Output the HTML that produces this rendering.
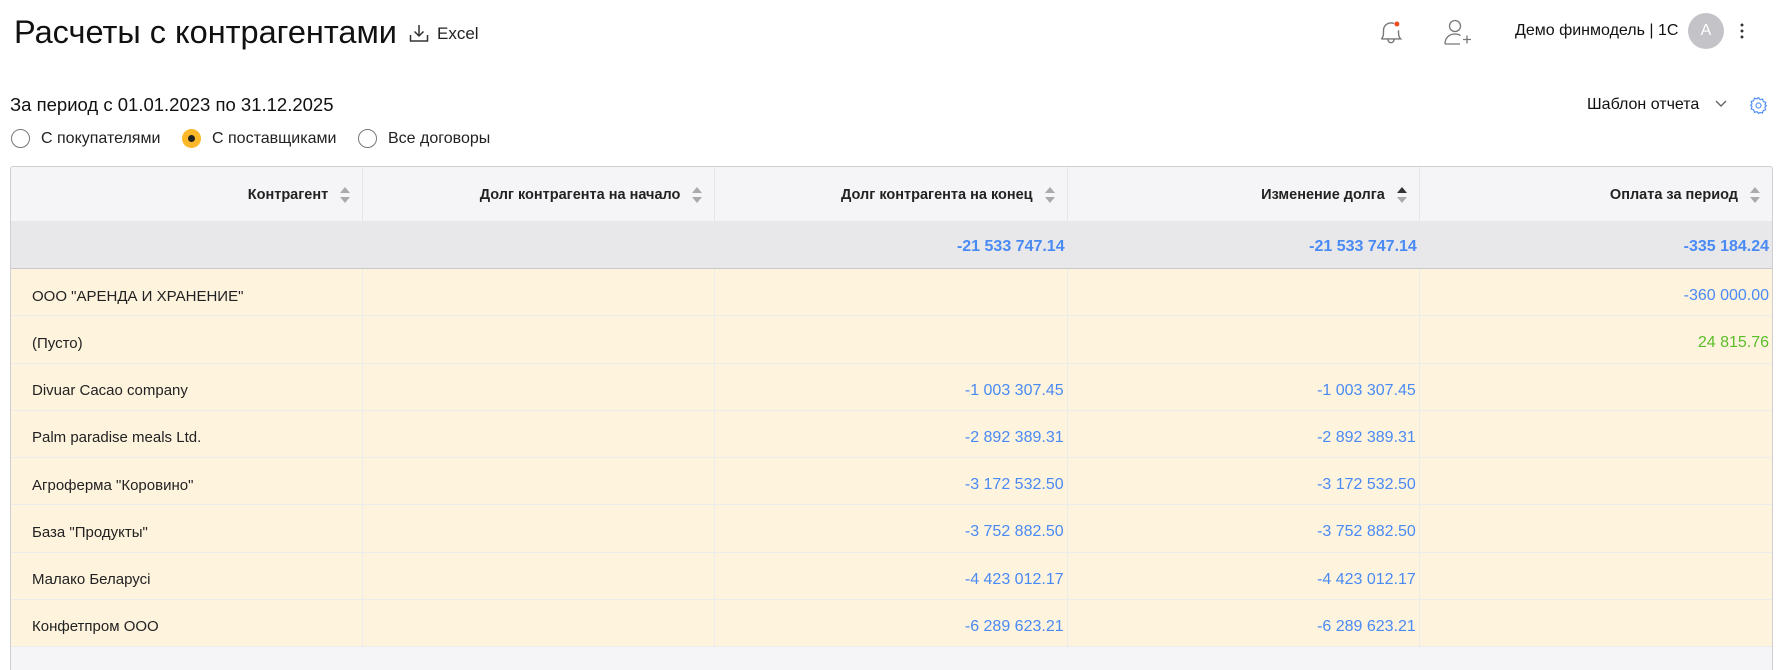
<!DOCTYPE html>
<html><head><meta charset="utf-8"><style>
*{box-sizing:border-box;margin:0;padding:0}
html,body{width:1781px;height:670px;overflow:hidden}
body{background:#fff;font-family:"Liberation Sans",sans-serif;color:#1a1a1a;position:relative}
.a{position:absolute;white-space:nowrap}
.tbl{position:absolute;left:10px;top:166px;width:1763px;height:504px;border:1px solid #cfcfd3;border-bottom:none;border-radius:3px 3px 0 0;background:#f5f5f7;overflow:hidden}
.row{position:absolute;left:0;width:1761px;display:flex}
.row div{width:352.4px;border-right:1px solid #ececec;display:flex;align-items:center;justify-content:flex-end;padding-right:3px;padding-top:8px;font-size:16px;color:#4a8af4}
.row div:last-child{border-right:none}
.row div.n{justify-content:flex-start;padding-left:21px;color:#222;font-size:15px}
.hd div{font-weight:bold;font-size:14.5px;color:#222;padding-right:12px;padding-top:2px;border-right:1px solid #e6e6e8}
.s{display:inline-block;width:10px;margin-left:12px;position:relative;height:16px}
.s:before{content:"";position:absolute;left:0;top:0;border-left:5px solid transparent;border-right:5px solid transparent;border-bottom:6px solid #aaa}
.s:after{content:"";position:absolute;left:0;bottom:0;border-left:5px solid transparent;border-right:5px solid transparent;border-top:6px solid #aaa}
.s.up:before{border-bottom-color:#333}
.dr{background:#fef3dd;border-bottom:1px solid #ececec}
.tot div{font-weight:bold;border-right:none;padding-top:4px}
</style></head><body>
<div class="a" style="left:14px;top:14px;font-size:32.5px;color:#111">Расчеты с контрагентами</div>
<svg class="a" style="left:409px;top:24px" width="20" height="19" viewBox="0 0 20 19" fill="none" stroke="#333" stroke-width="1.5"><path d="M10 1v11M5.5 7.5L10 12l4.5-4.5M1.5 11v6h17v-6"/></svg>
<div class="a" style="left:437px;top:24px;font-size:17px;color:#222">Excel</div>

<svg class="a" style="left:1376px;top:17px" width="30" height="30" viewBox="0 0 28 27" fill="none" stroke="#777" stroke-width="1.3"><path d="M5 20c2-2 2-4 2-8 0-4 3-7 7-7 1 0 2 .2 2.8.6M21 12c0 4 0 6 2 8H5M11 20.5c.5 2 1.5 3 3 3s2.5-1 3-3"/><circle cx="19.5" cy="6" r="2.3" fill="#f04b1c" stroke="none"/></svg>
<svg class="a" style="left:1442px;top:19px" width="32" height="28" viewBox="0 0 32 28" fill="none" stroke="#777" stroke-width="1.3"><circle cx="13" cy="7" r="5.5"/><path d="M3 25c0-6 4-10 10-10 2 0 4 .5 5.5 1.5M3 25h15M21 20.5h8M25 16.5v8"/></svg>
<div class="a" style="left:1515px;top:22px;font-size:16px;color:#111">Демо финмодель | 1С</div>
<div class="a" style="left:1688px;top:13px;width:36px;height:36px;border-radius:50%;background:#c4c4c8;color:#fff;font-size:16px;text-align:center;line-height:36px">A</div>
<div class="a" style="left:1740px;top:22px;width:4px;height:18px;background:radial-gradient(circle,#333 1.3px,transparent 1.6px) 0 0/4px 6px"></div>

<div class="a" style="left:10px;top:94px;font-size:18.5px;color:#111">За период с 01.01.2023 по 31.12.2025</div>
<div class="a" style="left:1587px;top:96px;font-size:16px;color:#111">Шаблон отчета</div>
<svg class="a" style="left:1714px;top:99px" width="14" height="10" viewBox="0 0 14 10" fill="none" stroke="#666" stroke-width="1.4"><path d="M2 2l5 5 5-5"/></svg>
<svg class="a" style="left:1749px;top:96px" width="19" height="19" viewBox="0 0 24 24" fill="none" stroke="#4a8af4" stroke-width="1.4"><circle cx="12" cy="12" r="3.2"/><path d="M12 2l2 2.6 3.2-.8.9 3.2 3.1 1-1 3.1L22 12l-2 2.4 1 3-3.1 1-.9 3.2-3.2-.8L12 22l-2-2.2-3.2.8-.9-3.2-3.1-1 1-3L2 12l1.8-1.9-1-3.1 3.1-1 .9-3.2 3.2.8z"/></svg>

<div class="a" style="left:11px;top:129px;width:19px;height:19px;border:1.3px solid #777;border-radius:50%"></div>
<div class="a" style="left:41px;top:130px;font-size:16px;color:#222">С покупателями</div>
<div class="a" style="left:182px;top:129px;width:19px;height:19px;border-radius:50%;background:#fbb829"><div style="position:absolute;left:6px;top:6px;width:7px;height:7px;border-radius:50%;background:#222"></div></div>
<div class="a" style="left:212px;top:130px;font-size:16px;color:#222">С поставщиками</div>
<div class="a" style="left:358px;top:129px;width:19px;height:19px;border:1.3px solid #777;border-radius:50%"></div>
<div class="a" style="left:388px;top:130px;font-size:16px;color:#222">Все договоры</div>

<div class="tbl">
<div class="row hd" style="top:0;height:54px;background:#f5f5f7">
<div>Контрагент<span class="s"></span></div><div>Долг контрагента на начало<span class="s"></span></div><div>Долг контрагента на конец<span class="s"></span></div><div>Изменение долга<span class="s up"></span></div><div>Оплата за период<span class="s"></span></div>
</div>
<div class="row tot" style="top:54px;height:48px;background:#e8e8ea;border-bottom:1.5px solid #c8c8cc">
<div></div><div></div><div>-21 533 747.14</div><div>-21 533 747.14</div><div>-335 184.24</div>
</div>
<div class="row dr" style="top:102px;height:47.25px"><div class="n">ООО "АРЕНДА И ХРАНЕНИЕ"</div><div></div><div></div><div></div><div>-360 000.00</div></div>
<div class="row dr" style="top:149.25px;height:47.25px"><div class="n">(Пусто)</div><div></div><div></div><div></div><div style="color:#5cbd2a">24 815.76</div></div>
<div class="row dr" style="top:196.5px;height:47.25px"><div class="n">Divuar Cacao company</div><div></div><div>-1 003 307.45</div><div>-1 003 307.45</div><div></div></div>
<div class="row dr" style="top:243.75px;height:47.25px"><div class="n">Palm paradise meals Ltd.</div><div></div><div>-2 892 389.31</div><div>-2 892 389.31</div><div></div></div>
<div class="row dr" style="top:291px;height:47.25px"><div class="n">Агроферма "Коровино"</div><div></div><div>-3 172 532.50</div><div>-3 172 532.50</div><div></div></div>
<div class="row dr" style="top:338.25px;height:47.25px"><div class="n">База "Продукты"</div><div></div><div>-3 752 882.50</div><div>-3 752 882.50</div><div></div></div>
<div class="row dr" style="top:385.5px;height:47.25px"><div class="n">Малако Беларусі</div><div></div><div>-4 423 012.17</div><div>-4 423 012.17</div><div></div></div>
<div class="row dr" style="top:432.75px;height:47.25px"><div class="n">Конфетпром ООО</div><div></div><div>-6 289 623.21</div><div>-6 289 623.21</div><div></div></div>
</div>
</body></html>
